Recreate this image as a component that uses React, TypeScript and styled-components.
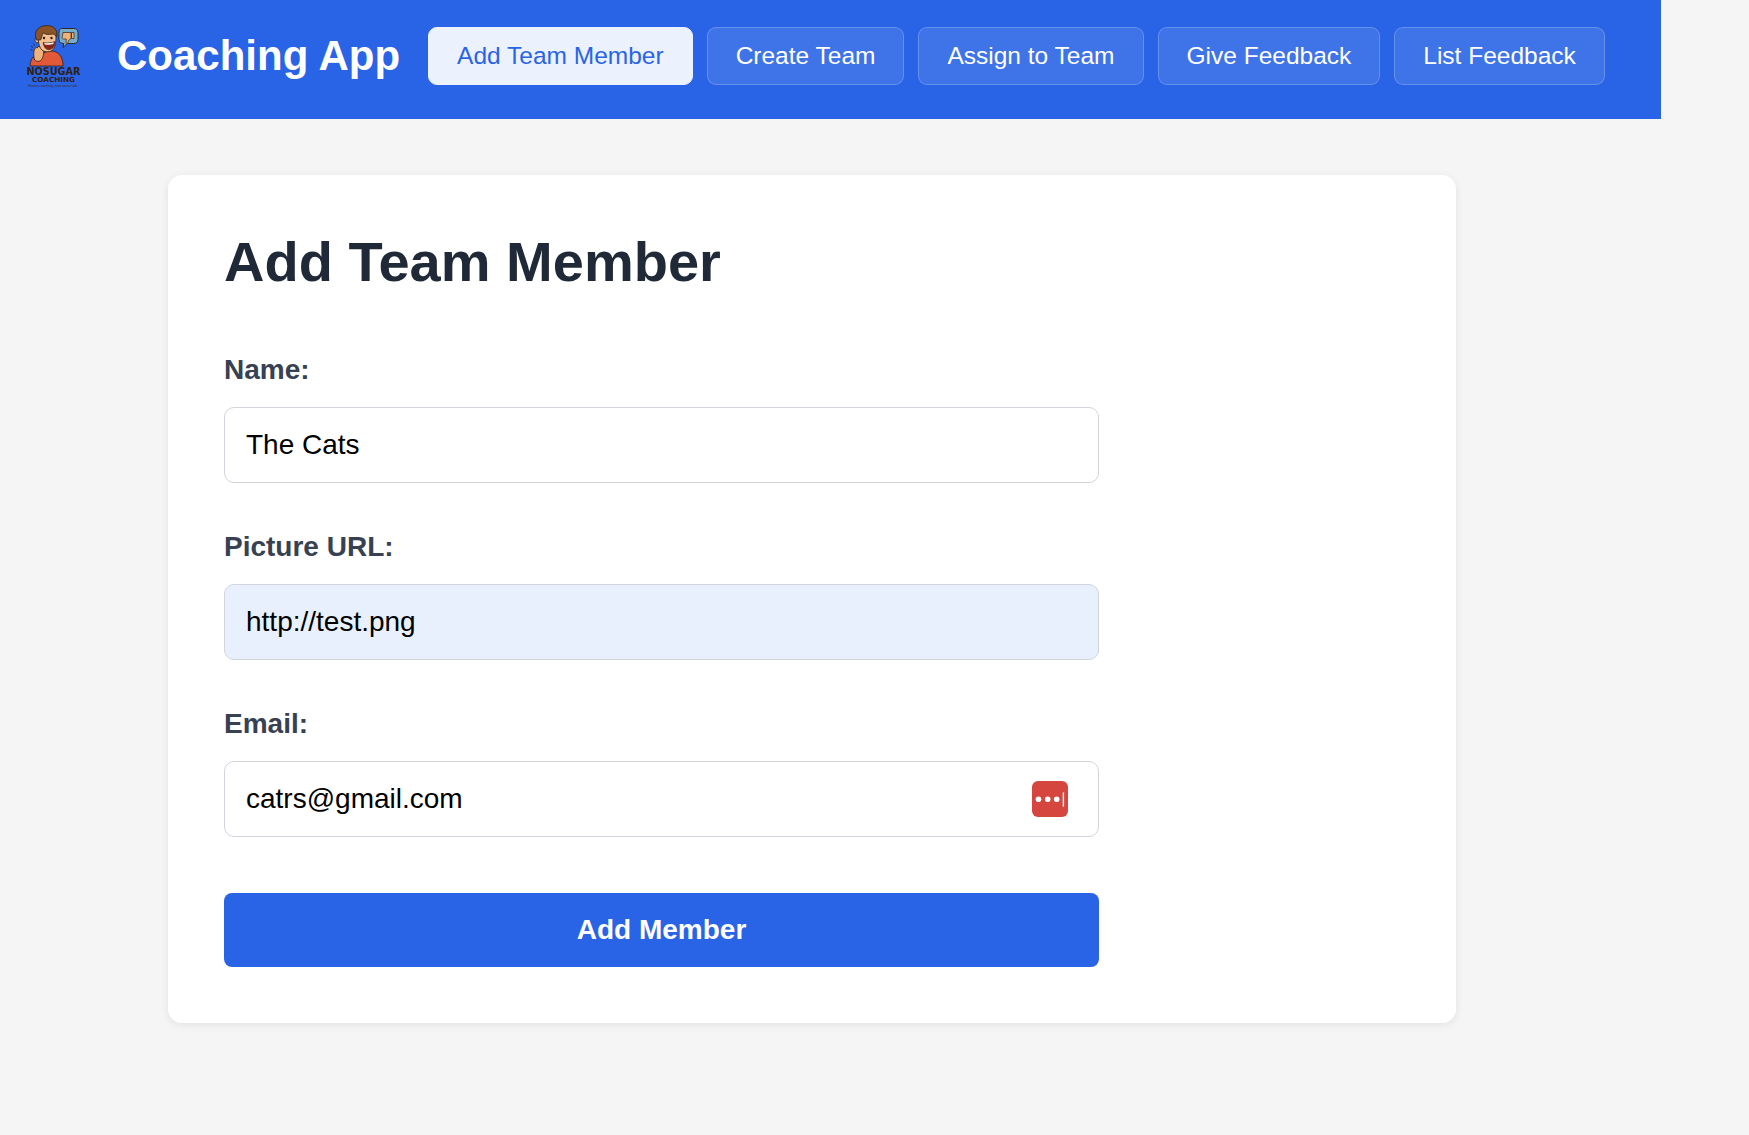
import React from "react";
import styled, { createGlobalStyle } from "styled-components";

const Global = createGlobalStyle`
  html, body { margin: 0; padding: 0; background: #f5f5f5; }
  body { font-family: "Liberation Sans", Arial, sans-serif; }
  * { box-sizing: border-box; }
`;

const Page = styled.div`
  width: 1661px;
  min-height: 1135px;
`;

const Header = styled.header`
  height: 119px;
  background: #2a64e6;
  display: flex;
  align-items: center;
  padding: 0 24px 7px 24px;
`;

const LogoBox = styled.div`
  width: 58px;
  height: 64px;
  flex: none;
  margin-right: 35px;
`;

const LogoSvg = styled.svg`
  display: block;
  width: 58px;
  height: 64px;
  overflow: visible;
`;

const Brand = styled.h1`
  margin: 0 28px 0 0;
  font-size: 42px;
  font-weight: 700;
  color: #fff;
  white-space: nowrap;
`;

const Nav = styled.nav`
  display: flex;
  gap: 14px;
`;

const NavButton = styled.button<{ $active?: boolean }>`
  height: 58px;
  padding: 0 28px;
  border-radius: 9px;
  font: 400 24.5px "Liberation Sans", Arial, sans-serif;
  white-space: nowrap;
  border: 1px solid ${(p) => (p.$active ? "#ebf1fd" : "rgba(255,255,255,0.2)")};
  background: ${(p) => (p.$active ? "#ebf1fd" : "rgba(255,255,255,0.1)")};
  color: ${(p) => (p.$active ? "#2a64e6" : "#fff")};
`;

const Main = styled.main`
  padding: 56px 205px 0 168px;
`;

const Card = styled.section`
  background: #fff;
  border-radius: 14px;
  box-shadow: 0 2px 8px rgba(0, 0, 0, 0.08);
  padding: 56px;
`;

const Title = styled.h2`
  margin: 0 0 61px;
  font-size: 56px;
  line-height: 62px;
  font-weight: 700;
  color: #1f2937;
`;

const Form = styled.form`
  width: 875px;
  display: flex;
  flex-direction: column;
`;

const Field = styled.div`
  display: flex;
  flex-direction: column;
  margin-bottom: 48px;
`;

const Label = styled.label`
  font-size: 28px;
  line-height: 32px;
  font-weight: 700;
  color: #374151;
  margin-bottom: 21px;
`;

const InputWrap = styled.div`
  position: relative;
`;

const Input = styled.input<{ $filled?: boolean }>`
  width: 100%;
  height: 76px;
  padding: 0 21px;
  border-radius: 10px;
  border: 1px solid #d1d5db;
  outline: none;
  font: 400 28px "Liberation Sans", Arial, sans-serif;
  color: #000;
  background: ${(p) => (p.$filled ? "#e8f0fe" : "#fff")};
`;

const ManagerBadge = styled.span`
  position: absolute;
  right: 31px;
  top: 20px;
  width: 36px;
  height: 36px;
  display: block;
`;

const Submit = styled.button`
  height: 74px;
  margin-top: 8px;
  border: none;
  border-radius: 8px;
  background: #2a64e6;
  color: #fff;
  font: 700 28px "Liberation Sans", Arial, sans-serif;
`;

function Logo() {
  return (
    <LogoSvg viewBox="24 24 58 64">
      <path d="M30 66c0-3 1-6 3-9l6 3c2-6 6-9 12-9 7 0 12 5 12 15z" fill="#e2593a" stroke="#33200f" strokeWidth="0.8" />
      <path d="M34.500 60c-1-4-1-8 0-11l1.800-1.500 1 .5.800-1.500 1.900.3 1.100.7 1.500-.3 1.400 2-.5 5c-.5 3-2 7-4.500 7-2 .5-3.500-.5-4.500-1.700z" fill="#eeb27c" stroke="#33200f" strokeWidth="0.8" />
      <path d="M30.500 49.500l2 .8M31 46l2.200 1.600M33.500 43.500l1.200 2.200" stroke="#33200f" strokeWidth="0.8" fill="none" />
      <ellipse cx="37" cy="40" rx="2" ry="2.800" fill="#eeb27c" stroke="#33200f" strokeWidth="0.7" />
      <path d="M38 34c0-3 4-5 9-5s9 2 9 6c0 7-.5 11-3 14.500-2.500 3-8 3-11 .5-3-2.500-4-9.500-4-16z" fill="#f2bf90" stroke="#33200f" strokeWidth="0.8" />
      <path d="M36.500 40c-2-5-1-10 3-12.500 4-2.500 10-2.500 13.500-.5 3.500 2 4.500 6 3.500 10-1-2-2.500-3-4.500-3-3 .8-7 .6-9-1.200-1 2-1 4.700-2.500 7.200-1.200 0-2.500-.2-4 0z" fill="#8b5426" stroke="#33200f" strokeWidth="0.8" />
      <circle cx="44" cy="38" r="1.200" fill="#2a1a0e" />
      <circle cx="51.500" cy="38" r="1.200" fill="#2a1a0e" />
      <path d="M43 42.500c4 .8 8 .5 12-1-.2 5-2.500 8.200-6.200 8.200-3.300 0-5.300-3.500-5.800-7.200z" fill="#8a2318" stroke="#33200f" strokeWidth="0.5" />
      <path d="M44.200 43c3.300.5 6.600.3 9.500-.7l-.4 1.800c-2.800.8-5.500.8-8.500.3z" fill="#fff" />
      <path d="M61.500 28.500h12.500c2.500 0 4 1.500 4 4v7c0 2.500-1.500 4-4 4h-6.500l-4.500 4 .8-4c-3 0-4.800-1.500-4.800-4v-7c0-2.500 1-4 2.500-4z" fill="#79acc6" stroke="#2b2a28" strokeWidth="1" />
      <path d="M71.500 32.500h2.500v6h-2.500z" fill="#eeb27c" stroke="#33200f" strokeWidth="0.7" />
      <path d="M63 32.500h8v6l-2.500 2-.8 3.200-1.700-.7.300-4H63.500c-1.200 0-1.600-.9-1.300-1.700z" fill="#eeb27c" stroke="#33200f" strokeWidth="0.7" />
      <text x="53.400" y="75" textAnchor="middle" fontFamily="'DejaVu Sans', sans-serif" fontWeight="700" fontSize="10" fill="#2e2110" textLength="54" lengthAdjust="spacingAndGlyphs">NOSUGAR</text>
      <text x="53.500" y="82" textAnchor="middle" fontFamily="'DejaVu Sans', sans-serif" fontWeight="700" fontSize="7" fill="#2e2110" textLength="43" lengthAdjust="spacingAndGlyphs">COACHING</text>
      <text x="53" y="86.500" textAnchor="middle" fontFamily="'Liberation Sans', sans-serif" fontSize="3" fill="#3a2e1c" textLength="50" lengthAdjust="spacingAndGlyphs">Honest coaching, zero sweet talk.</text>
    </LogoSvg>
  );
}

function KeyIcon() {
  return (
    <svg viewBox="0 0 36 36" width="36" height="36">
      <rect width="36" height="36" rx="6" fill="#d5463f" />
      <circle cx="6.500" cy="18.300" r="2.800" fill="#fff" />
      <circle cx="15.700" cy="18.300" r="2.800" fill="#fff" />
      <circle cx="24.700" cy="18.300" r="2.800" fill="#fff" />
      <rect x="30.700" y="11.500" width="1.400" height="14" fill="#fff" />
    </svg>
  );
}

const navItems = ["Add Team Member", "Create Team", "Assign to Team", "Give Feedback", "List Feedback"];

export default function App() {
  return (
    <Page>
      <Global />
      <Header>
        <LogoBox>
          <Logo />
        </LogoBox>
        <Brand>Coaching App</Brand>
        <Nav>
          {navItems.map((item, i) => (
            <NavButton key={item} $active={i === 0}>
              {item}
            </NavButton>
          ))}
        </Nav>
      </Header>
      <Main>
        <Card>
          <Title>Add Team Member</Title>
          <Form onSubmit={(e) => e.preventDefault()}>
            <Field>
              <Label>Name:</Label>
              <Input defaultValue="The Cats" />
            </Field>
            <Field>
              <Label>Picture URL:</Label>
              <Input $filled defaultValue="http://test.png" />
            </Field>
            <Field>
              <Label>Email:</Label>
              <InputWrap>
                <Input defaultValue="catrs@gmail.com" />
                <ManagerBadge>
                  <KeyIcon />
                </ManagerBadge>
              </InputWrap>
            </Field>
            <Submit type="submit">Add Member</Submit>
          </Form>
        </Card>
      </Main>
    </Page>
  );
}
